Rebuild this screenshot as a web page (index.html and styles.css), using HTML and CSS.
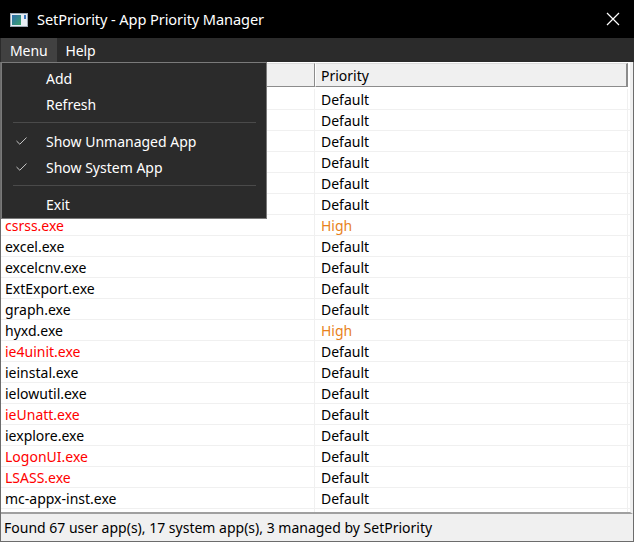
FILE: index.html
```html
<!DOCTYPE html>
<html>
<head>
<meta charset="utf-8">
<link rel="stylesheet" href="styles.css">
</head>
<body>
<div class="window">
  <div class="titlebar">
    <svg class="app-icon" width="18" height="14" viewBox="0 0 18 14">
      <rect x="0.5" y="0.5" width="17" height="13" fill="#e8eef4" stroke="#9aa7b3"/>
      <defs><linearGradient id="g" x1="0" y1="0" x2="1" y2="1"><stop offset="0" stop-color="#2f6db0"/><stop offset="1" stop-color="#3aa36a"/></linearGradient></defs>
      <rect x="2" y="2" width="9" height="10" fill="url(#g)"/>
      <rect x="14" y="2" width="2" height="4" fill="#3a78c0"/>
    </svg>
    <span class="title">SetPriority - App Priority Manager</span>
    <svg class="close" width="14" height="14" viewBox="0 0 14 14"><path d="M1 1 L13 13 M13 1 L1 13" stroke="#fff" stroke-width="1.2"/></svg>
  </div>
  <div class="menubar">
    <span class="menu-item active">Menu</span>
    <span class="menu-item">Help</span>
  </div>
  <div class="content">
    <div class="list">
      <div class="header">
        <div class="hcell name"></div>
        <div class="hcell prio">Priority</div>
        <div class="hfill"></div>
      </div>
      <div class="rows">
        <div class="row"><div class="cell name">ApplicationFrameHost.exe</div><div class="cell prio">Default</div></div>
        <div class="row"><div class="cell name">audiodg.exe</div><div class="cell prio">Default</div></div>
        <div class="row"><div class="cell name">backgroundTaskHost.exe</div><div class="cell prio">Default</div></div>
        <div class="row"><div class="cell name">chrome.exe</div><div class="cell prio">Default</div></div>
        <div class="row"><div class="cell name">cmd.exe</div><div class="cell prio">Default</div></div>
        <div class="row"><div class="cell name">conhost.exe</div><div class="cell prio">Default</div></div>
        <div class="row"><div class="cell name sys">csrss.exe</div><div class="cell prio high">High</div></div>
        <div class="row"><div class="cell name">excel.exe</div><div class="cell prio">Default</div></div>
        <div class="row"><div class="cell name">excelcnv.exe</div><div class="cell prio">Default</div></div>
        <div class="row"><div class="cell name">ExtExport.exe</div><div class="cell prio">Default</div></div>
        <div class="row"><div class="cell name">graph.exe</div><div class="cell prio">Default</div></div>
        <div class="row"><div class="cell name">hyxd.exe</div><div class="cell prio high">High</div></div>
        <div class="row"><div class="cell name sys">ie4uinit.exe</div><div class="cell prio">Default</div></div>
        <div class="row"><div class="cell name">ieinstal.exe</div><div class="cell prio">Default</div></div>
        <div class="row"><div class="cell name">ielowutil.exe</div><div class="cell prio">Default</div></div>
        <div class="row"><div class="cell name sys">ieUnatt.exe</div><div class="cell prio">Default</div></div>
        <div class="row"><div class="cell name">iexplore.exe</div><div class="cell prio">Default</div></div>
        <div class="row"><div class="cell name sys">LogonUI.exe</div><div class="cell prio">Default</div></div>
        <div class="row"><div class="cell name sys">LSASS.exe</div><div class="cell prio">Default</div></div>
        <div class="row"><div class="cell name">mc-appx-inst.exe</div><div class="cell prio">Default</div></div>
        <div class="row"><div class="cell name"></div><div class="cell prio"></div></div>
      </div>
    </div>
    <div class="status">Found 67 user app(s), 17 system app(s), 3 managed by SetPriority</div>
  </div>

  <div class="dropdown">
    <div class="dd-item"><span class="check"></span>Add</div>
    <div class="dd-item"><span class="check"></span>Refresh</div>
    <div class="dd-sep"></div>
    <div class="dd-item"><span class="check"><svg width="11" height="8" viewBox="0 0 11 8"><path d="M0.5 4 L3.8 7.2 L10.5 0.6" fill="none" stroke="#c8c8c8" stroke-width="1"/></svg></span>Show Unmanaged App</div>
    <div class="dd-item"><span class="check"><svg width="11" height="8" viewBox="0 0 11 8"><path d="M0.5 4 L3.8 7.2 L10.5 0.6" fill="none" stroke="#c8c8c8" stroke-width="1"/></svg></span>Show System App</div>
    <div class="dd-sep"></div>
    <div class="dd-item"><span class="check"></span>Exit</div>
  </div>
</div>
</body>
</html>
```

FILE: styles.css
```css
html, body {
  margin: 0;
  padding: 0;
  background: #000;
}
body {
  font-family: "Noto Sans", "Open Sans", sans-serif;
}
.window {
  position: relative;
  width: 634px;
  height: 542px;
  display: flex;
  flex-direction: column;
  background: #000;
  overflow: hidden;
}
.titlebar {
  height: 38px;
  display: flex;
  align-items: center;
  background: #000;
  color: #fff;
  padding-left: 10px;
  box-sizing: border-box;
}
.app-icon {
  margin-right: 9px;
  margin-top: 1px;
}
.title {
  font-size: 14.6px;
  flex: 1;
  letter-spacing: -0.1px;
}
.close {
  margin-right: 14px;
}
.menubar {
  height: 24px;
  background: #2b2b2b;
  display: flex;
  align-items: stretch;
  padding-left: 1px;
}
.menu-item {
  color: #fff;
  font-size: 14px;
  padding: 0 9px;
  display: flex;
  align-items: center;
  letter-spacing: -0.1px;
}
.menu-item.active {
  background: #414141;
}
.content {
  flex: 1;
  display: flex;
  flex-direction: column;
  background: #f0f0f0;
  border-left: 1px solid #6c6c6c;
  border-right: 1px solid #6c6c6c;
  border-bottom: 1px solid #6c6c6c;
  min-height: 0;
}
.list {
  flex: 1;
  background: #fff;
  border-right: 3px solid #f0f0f0;
  border-bottom: 2px solid #a0a0a0;
  overflow: hidden;
  min-height: 0;
  padding-top: 1px;
}
.header {
  display: flex;
  height: 24px;
  box-sizing: border-box;
  margin-bottom: 2px;
}
.hcell {
  background: #f0f0f0;
  border-top: 1px solid #dcdcdc;
  border-left: 1px solid #fff;
  border-right: 1px solid #8c8c8c;
  border-bottom: 1px solid #8c8c8c;
  font-size: 14px;
  color: #000;
  display: flex;
  align-items: center;
  box-sizing: border-box;
}
.hcell.name { width: 314px; }
.hcell.prio { width: 313px; padding-left: 5px; border-right: 2px solid #8c8c8c; }
.hfill { flex: 1; background: #fff; }
.row {
  display: flex;
  height: 21px;
  border-bottom: 1px solid #f0f0f0;
  box-sizing: border-box;
}
.cell {
  font-size: 14px;
  color: #000;
  display: flex;
  align-items: center;
  white-space: nowrap;
  overflow: hidden;
  box-sizing: border-box;
}
.cell.name {
  width: 314px;
  padding-left: 4px;
  border-right: 1px solid #f0f0f0;
}
.cell.prio {
  width: 313px;
  padding-left: 6px;
  border-right: 1px solid #f0f0f0;
}
.sys { color: #ff0000; }
.high { color: #e8821c; }
.status {
  height: 27px;
  display: flex;
  align-items: center;
  padding-left: 3px;
  font-size: 14px;
  color: #000;
  flex-shrink: 0;
}
.dropdown {
  position: absolute;
  left: 1px;
  top: 62px;
  width: 266px;
  height: 157px;
  box-sizing: border-box;
  background: #2b2b2b;
  border: 1px solid #7a7a7a;
  padding-top: 2px;
}
.dd-item {
  height: 26px;
  display: flex;
  align-items: center;
  color: #fff;
  font-size: 14px;
}
.check {
  width: 44px;
  padding-left: 14px;
  box-sizing: border-box;
  display: flex;
  align-items: center;
}
.dd-sep {
  height: 1px;
  background: #4a4a4a;
  margin: 5px 10px 5px 11px;
}
```
